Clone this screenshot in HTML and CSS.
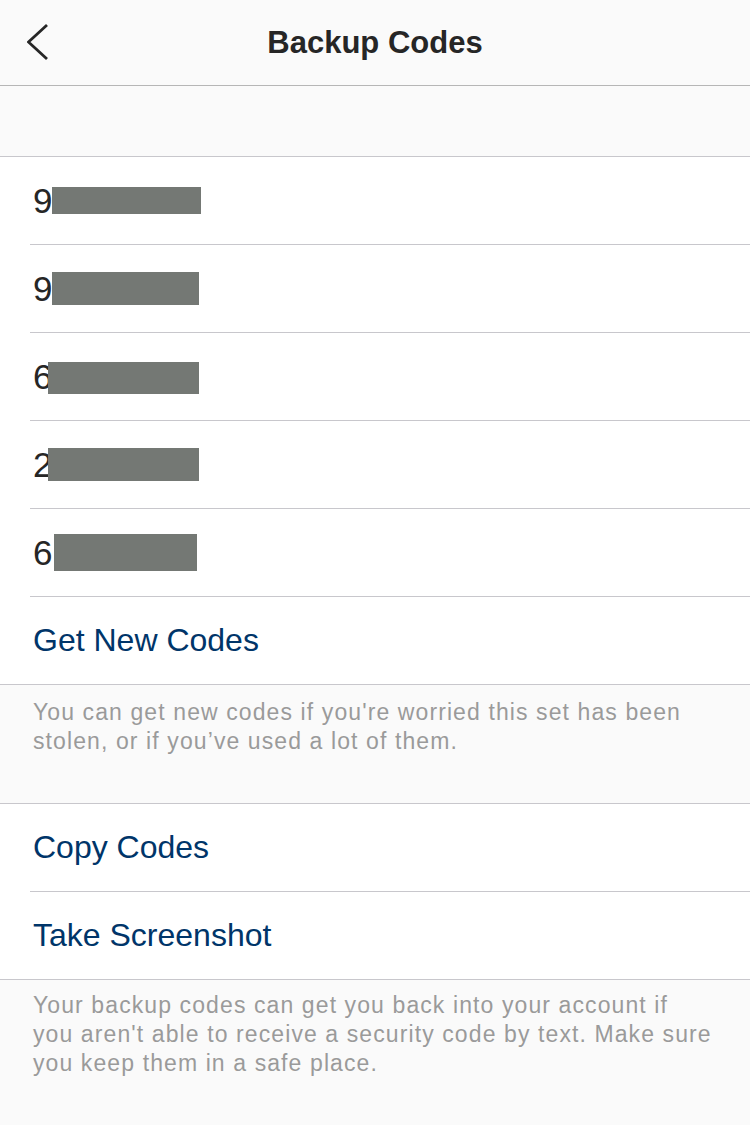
FILE: index.html
```html
<!DOCTYPE html>
<html lang="en">
<head>
	<title>Backup Codes</title>
	<meta charset="UTF-8">
	<link rel="stylesheet" href="styles.css">
</head>
<body>
	<div class="zaglavlje">
		<a class="nazad" href="#">
			<svg width="24" height="40" viewBox="0 0 24 40"><polyline points="20,4 1.5,21 20,38" fill="none" stroke="#262626" stroke-width="2.8"/></svg>
		</a>
		<h1>Backup Codes</h1>
	</div>
	<div class="razmak"></div>
	<div class="grupa">
		<div class="stavka kod"><span>9</span><span class="maska m1"></span></div>
		<div class="stavka kod"><span>9</span><span class="maska m2"></span></div>
		<div class="stavka kod"><span>6</span><span class="maska m3"></span></div>
		<div class="stavka kod"><span>2</span><span class="maska m4"></span></div>
		<div class="stavka kod"><span>6</span><span class="maska m5"></span></div>
		<a class="stavka link" href="#">Get New Codes</a>
	</div>
	<p class="napomena prva">You can get new codes if you're worried this set has been stolen, or if you’ve used a lot of them.</p>
	<div class="grupa">
		<a class="stavka link" href="#">Copy Codes</a>
		<a class="stavka link" href="#">Take Screenshot</a>
	</div>
	<p class="napomena">Your backup codes can get you back into your account if you aren't able to receive a security code by text. Make sure you keep them in a safe place.</p>
</body>
</html>
```

FILE: styles.css
```css
body{
	margin: 0;
	background-color: #fafafa;
	font-family: "Liberation Sans", Arial, sans-serif;
	color: #262626;
}
.zaglavlje{
	height: 85px;
	border-bottom: 1px solid #b6b6b6;
	display: flex;
	align-items: center;
	justify-content: center;
	position: relative;
}
.zaglavlje h1{
	margin: 0;
	font-size: 31px;
	font-weight: bold;
	color: #262626;
}
.nazad{
	position: absolute;
	left: 27px;
	top: 21px;
	display: flex;
}
.razmak{
	height: 70px;
}
.grupa{
	background-color: #fff;
	border-top: 1px solid #c8c7cc;
	border-bottom: 1px solid #c8c7cc;
	display: flex;
	flex-direction: column;
}
.stavka{
	margin-left: 30px;
	padding-left: 3px;
	height: 87px;
	border-bottom: 1px solid #c8c7cc;
	display: flex;
	align-items: center;
	text-decoration: none;
}
.stavka:last-child{
	border-bottom: none;
}
.kod{
	font-size: 35px;
	color: #262626;
}
.link{
	font-size: 32px;
	color: #003569;
}
.maska{
	display: inline-block;
	background-color: #747874;
}
.m1{ width: 149px; height: 27px; margin-left: 0; }
.m2{ width: 147px; height: 33px; margin-left: 0; }
.m3{ width: 151px; height: 32px; margin-left: -4px; margin-top: 3px; }
.m4{ width: 151px; height: 33px; margin-left: -4px; }
.m5{ width: 143px; height: 37px; margin-left: 2px; }
.napomena{
	margin: 0;
	padding: 11px 35px 0 33px;
	font-size: 23px;
	letter-spacing: 1.1px;
	line-height: 29px;
	color: #9a9a9a;
	height: 145px;
	box-sizing: border-box;
}
.napomena.prva{
	padding-top: 13px;
	height: 118px;
}
```
